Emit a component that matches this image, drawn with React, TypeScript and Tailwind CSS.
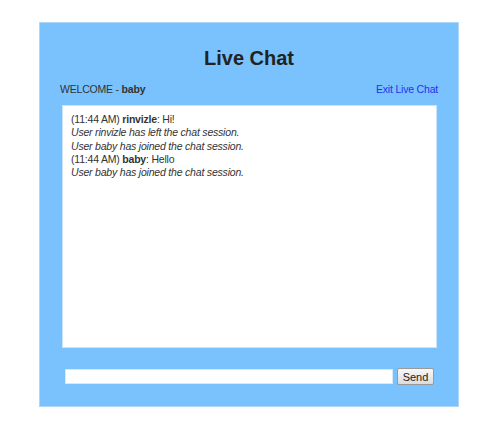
export default function App() {
  return (
    <div className="w-[500px] h-[442px] bg-white pt-[22px] pl-[39px]" style={{ fontFamily: '"Liberation Sans", Arial, sans-serif' }}>
      <div className="w-[420px] h-[385px] border border-[#aed6f7] bg-[#79c2fd] pt-[23px] text-[#333]">
        <h1 className="text-center text-[20px] leading-[24px] font-bold text-[#222]">Live Chat</h1>
        <div className="mt-[12px] flex justify-between px-[20px] text-[10.5px] leading-[14px] tracking-[-0.2px]">
          <span>
            WELCOME - <b>baby</b>
          </span>
          <a href="#" className="text-[#2233ee]">Exit Live Chat</a>
        </div>
        <div className="mt-[9px] ml-[22px] w-[375px] h-[243px] border border-[#c9e4fb] bg-white px-[8px] pt-[7px] text-[10.5px] leading-[13.3px] tracking-[-0.2px] text-[#333]">
          <div>
            (11:44 AM) <b>rinvizle</b>: Hi!
          </div>
          <div className="italic">User rinvizle has left the chat session.</div>
          <div className="italic">User baby has joined the chat session.</div>
          <div>
            (11:44 AM) <b>baby</b>: Hello
          </div>
          <div className="italic">User baby has joined the chat session.</div>
        </div>
        <div className="mt-[20px] ml-[25px] flex items-center gap-[4px]">
          <input type="text" className="w-[328px] h-[15px] bg-white border border-[#d5e9fa] outline-none" />
          <button className="h-[17px] w-[37px] rounded-[2px] border border-[#9a9a9a] bg-gradient-to-b from-[#f8f8f8] to-[#dcdcdc] text-[11px] leading-[14px] text-[#222]">
            Send
          </button>
        </div>
      </div>
    </div>
  );
}
